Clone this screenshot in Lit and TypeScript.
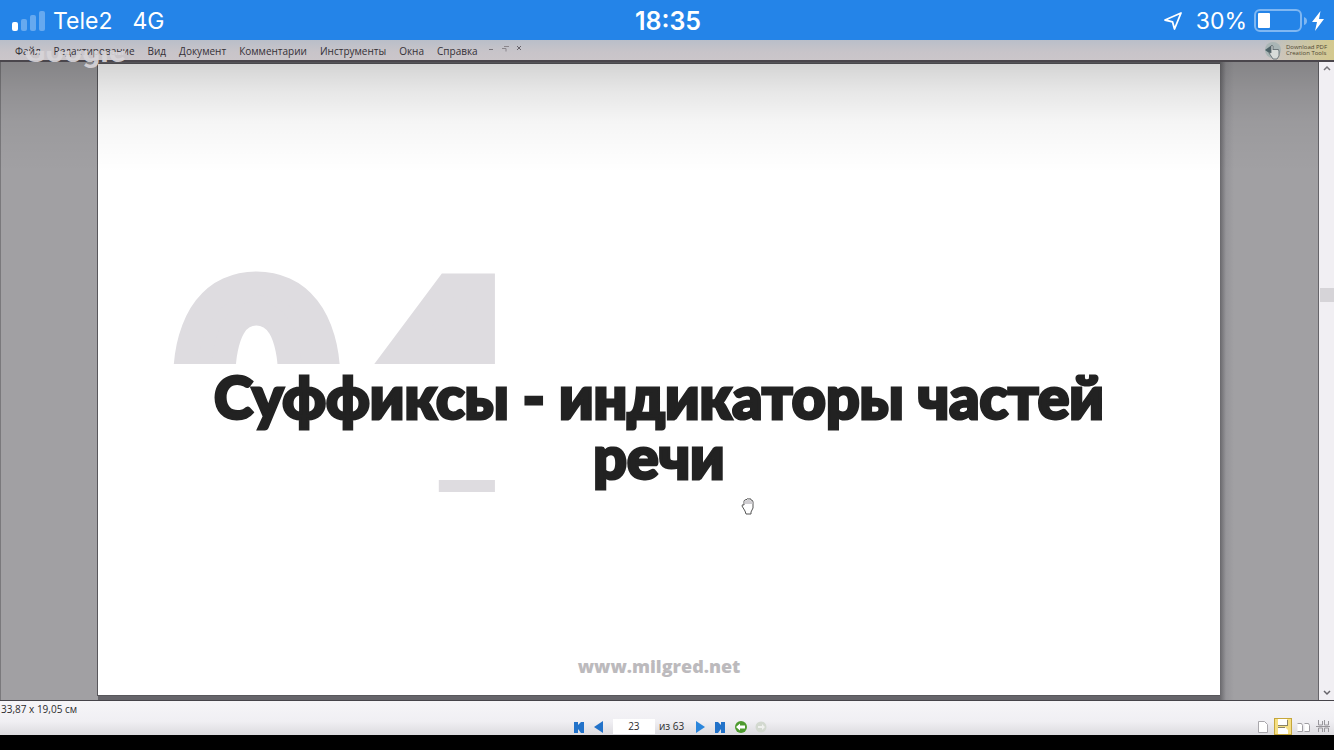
import { LitElement, html, css, svg } from "lit";
import { customElement, state } from "lit/decorators.js";

const MENU = ["Файл", "Редактирование", "Вид", "Документ", "Комментарии", "Инструменты", "Окна", "Справка"];

@customElement("phone-status")
class PhoneStatus extends LitElement {
  static styles = css`
    :host {
      display: grid;
      grid-template-columns: 1fr auto 1fr;
      align-items: center;
      box-sizing: border-box;
      height: 40px;
      padding: 2px 10px 0 12px;
      background: #2484e8;
      color: #fff;
      font: 400 23px/38px Inter, "Liberation Sans", sans-serif;
    }
    .side { display: flex; align-items: center; }
    .left { gap: 8px; }
    .net { margin-left: 12px; }
    .right { justify-content: flex-end; }
    .time { font-weight: 600; font-size: 25px; }
    .pct { margin: 0 7px 0 13px; }
    svg { display: block; }
    .bolt { margin-left: 5px; }
  `;
  render() {
    return html`
      <div class="side left">
        <svg width="33" height="20" viewBox="0 0 33 20" fill="#fff">
          <rect x="0" y="11" width="6" height="9" rx="2" />
          <g opacity=".3">
            <rect x="9" y="8" width="6" height="12" rx="2" />
            <rect x="18" y="4" width="6" height="16" rx="2" />
            <rect x="27" y="0" width="6" height="20" rx="2" />
          </g>
        </svg>
        <span>Tele2</span><span class="net">4G</span>
      </div>
      <span class="time">18:35</span>
      <div class="side right">
        <svg width="20" height="20" viewBox="0 0 20 20" fill="none" stroke="#fff" stroke-width="1.8" stroke-linejoin="round">
          <path d="M18 2 L11.5 18 L9.5 10.8 L2 9 Z" />
        </svg>
        <span class="pct">30%</span>
        <svg width="53" height="24" viewBox="0 0 53 24">
          <rect x="1" y="1" width="46" height="21" rx="5" fill="none" stroke="#fff" stroke-opacity=".42" stroke-width="2" />
          <rect x="4" y="4" width="12" height="15" rx="1" fill="#fff" />
          <path d="M50 8 Q53 9 53 12 Q53 15 50 16Z" fill="#fff" fill-opacity=".42" />
        </svg>
        <svg class="bolt" width="12" height="20" viewBox="0 0 12 20" fill="#fff">
          <path d="M8.5 0 L0 11 H5 L3 20 L12 8 H7 Z" />
        </svg>
      </div>
    `;
  }
}

@customElement("menu-strip")
class MenuStrip extends LitElement {
  static styles = css`
    :host {
      display: flex;
      position: relative;
      z-index: 2;
      align-items: center;
      height: 20px;
      padding-left: 15px;
      background: linear-gradient(#b9bec9, #c8c4c9 60%, #cbc6ca);
      color: #343036;
      font: 10px/18px "Open Sans", "Noto Sans", sans-serif;
    }
    nav { display: flex; gap: 13px; padding-top: 2px; }
    button { all: unset; cursor: pointer; white-space: nowrap; }
    .win { display: flex; gap: 4px; margin-left: 8px; padding-bottom: 4px; }
    .win button { width: 10px; height: 10px; }
    svg { display: block; }
    .mark {
      position: absolute;
      left: 24px;
      top: -7px;
      font: 700 32px/36px Roboto, "Open Sans", sans-serif;
      color: #d8d5d9;
      opacity: .9;
      pointer-events: none;
      clip-path: inset(18px 0 0 0);
    }
    a {
      display: flex;
      align-items: center;
      gap: 3px;
      margin-left: auto;
      width: 70px;
      height: 20px;
      color: #4f4630;
      font: 6px/6px "Open Sans", sans-serif;
      text-decoration: none;
      white-space: nowrap;
      background: linear-gradient(90deg, #c8c4c900, #d4c98e);
    }
  `;
  render() {
    return html`
      <nav>${MENU.map((m) => html`<button>${m}</button>`)}</nav>
      <div class="win">
        <button aria-label="Свернуть"><svg width="10" height="10" fill="none" stroke="#77737a"><path d="M3 6.5h4" /></svg></button>
        <button aria-label="Восстановить"><svg width="10" height="10" fill="none" stroke="#8a868c"><path d="M4 3.5h5M2 5.5h4v3" /></svg></button>
        <button aria-label="Закрыть"><svg width="10" height="10" fill="none" stroke="#66626a"><path d="M3 3l4 4M7 3l-4 4" /></svg></button>
      </div>
      <span class="mark">Google</span>
      <a href="#tools">
        <svg width="19" height="20" viewBox="0 0 19 20">
          <circle cx="9" cy="10" r="8" fill="#a9b5b5" />
          <path d="M1 10l7-5v10z" fill="#4d6267" />
          <path d="M7 12V6q1-1.500 2 0v4l1-1 1 1 1-1 1 1 1-1 1 2v5l-2 3H9l-4-6q1-1 2 0z" fill="#d8dbd9" stroke="#5b6569" stroke-width=".8" />
        </svg>
        <span>Download PDF<br />Creation Tools</span>
      </a>
    `;
  }
}

@customElement("slide-view")
class SlideView extends LitElement {
  static styles = css`
    :host {
      display: grid;
      position: relative;
      grid-template-columns: 98px minmax(0, 1fr) 99px 15px;
      background: #a1a0a3;
      border-top: 2px solid #4a464c;
      border-bottom: 1px solid #46444a;
      box-sizing: border-box;
    }
    .left { border-left: 1px solid #7a797c; }
    .right {
      border-right: 1px solid #66656a;
      background: linear-gradient(90deg, #69686c, #969599 6px, #a1a0a3 14px);
    }
    .desk { display: grid; padding: 2px 0 5px; background: #66656a; }
    .page {
      display: grid;
      grid-template-rows: 1fr auto;
      background: #fff;
      box-shadow: 0 0 0 1px #58575b;
    }
    .content { display: grid; align-content: start; padding-top: 172px; }
    .number, .title { grid-area: 1 / 1; }
    .number {
      display: flex;
      gap: 22px;
      padding-left: 81px;
      color: #dedce0;
      font: 900 268px/280px Lato, "Open Sans", sans-serif;
      -webkit-text-stroke: 24px #dedce0;
    }
    .zero { clip-path: inset(0 -20px 140px -20px); }
    .title {
      align-self: start;
      position: relative;
      box-sizing: border-box;
      height: 116px;
      margin: 128px 0 0;
      padding: 3px 100px 0;
      background: #fff;
      color: #222;
      text-align: center;
      font: 900 59px/60px Lato, "Open Sans", sans-serif;
      -webkit-text-stroke: 3px #222;
    }
    .site {
      padding-bottom: 17px;
      color: #bcbabd;
      text-align: center;
      font: 800 18px/24px "Open Sans", sans-serif;
    }
    .shade {
      position: absolute;
      inset: 0 15px auto 0;
      height: 110px;
      background: linear-gradient(#0000002c, #00000018 30px, #0000000a 60px, #0000);
      pointer-events: none;
    }
    .hand { position: absolute; left: 741px; top: 435px; }
    .bar {
      display: flex;
      flex-direction: column;
      align-items: center;
      justify-content: space-between;
      position: relative;
      background: #f1eff3;
    }
    .bar button { all: unset; width: 15px; height: 15px; }
    .thumb { position: absolute; top: 35.500%; left: 1px; right: 0; height: 14px; background: #d6d4d8; }
    svg { display: block; }
  `;
  render() {
    return html`
      <div class="left"></div>
      <div class="desk">
        <article class="page">
          <div class="content">
            <div class="number"><span class="zero">0</span><span>4</span></div>
            <h1 class="title">Суффиксы - индикаторы частей речи</h1>
          </div>
          <div class="site">www.milgred.net</div>
        </article>
      </div>
      <div class="right"></div>
      <div class="bar">
        <button aria-label="Вверх"><svg width="15" height="15" fill="none" stroke="#77757a" stroke-width="1.5"><path d="M5 8l3-3 3 3" /></svg></button>
        <div class="thumb"></div>
        <button aria-label="Вниз"><svg width="15" height="15" fill="none" stroke="#66646a" stroke-width="1.5"><path d="M5 6l3 3 3-3" /></svg></button>
      </div>
      <div class="shade"></div>
      <svg class="hand" width="14" height="18" viewBox="0 0 14 18">
        <path d="M3 8V4q1-2 2-1 1-2 3-1 2-1 2 1 2 0 2 2v6l-2 4v2H5l-1-3-3-5q0-2 2-1z" fill="#fff" stroke="#555" stroke-width="1" />
        <path d="M3.500 7V4q1-1 2-.5 1-1.500 2.500-.5 2 0 2 1 1 0 1.500 1v2z" fill="#cfcdd1" />
      </svg>
    `;
  }
}

@customElement("page-nav")
class PageNav extends LitElement {
  @state() page = "23";
  static styles = css`
    :host {
      display: grid;
      grid-template-rows: 17px 17px;
      height: 34px;
      background: linear-gradient(#f6f5f8, #f0eff3 60%, #dcdbdf);
      color: #2c2c2e;
      font: 10px/17px "Open Sans", "Noto Sans", sans-serif;
    }
    .size { padding-left: 1px; }
    .row { display: grid; grid-template-columns: 1fr auto 1fr; align-items: center; padding-left: 6px; }
    .nav { grid-column: 2; display: flex; align-items: center; gap: 8px; }
    .views { display: flex; justify-content: flex-end; gap: 2px; padding-right: 2px; }
    button { all: unset; display: block; }
    svg { display: block; }
    label { display: flex; align-items: center; gap: 4px; margin: 0 2px 0 0; }
    input {
      box-sizing: border-box;
      width: 42px;
      height: 15px;
      padding: 0;
      border: 0;
      background: #fff;
      color: inherit;
      text-align: center;
      font: inherit;
    }
  `;
  private icon(label: string, shape: unknown, w = 12) {
    return html`<button aria-label=${label}><svg width=${w} height="12" viewBox="0 0 ${w} 12">${shape}</svg></button>`;
  }
  private view(label: string, shape: unknown) {
    return html`<button aria-label=${label}><svg width="18" height="17" viewBox="0 0 18 17">${shape}</svg></button>`;
  }
  render() {
    return html`
      <div class="size">33,87 x 19,05 см</div>
      <div class="row">
        <div class="nav">
          ${this.icon("Первая", svg`<path d="M1 1h4v3l3-3h3v11H8L5 8v4H1z" fill="#2272c9" />`)}
          ${this.icon("Назад", svg`<path d="M10 0v12L1 6z" fill="#2272c9" />`)}
          <label><input .value=${this.page} aria-label="Страница" @input=${(e: any) => (this.page = e.target.value)} /><span>из 63</span></label>
          ${this.icon("Вперёд", svg`<path d="M2 0l9 6-9 6z" fill="#2b86dc" />`)}
          ${this.icon("Последняя", svg`<path d="M11 1H7v3L4 1H1v11h3l3-4v4h4z" fill="#2272c9" />`)}
          ${this.icon("Предыдущий вид", svg`<circle cx="7" cy="6" r="6" fill="#4d9a2e" /><path d="M2 6l4-3.500v2h5v3H6v2z" fill="#fff" />`, 13)}
          ${this.icon("Следующий вид", svg`<circle cx="6" cy="6" r="5.500" fill="#d3d9d0" /><path d="M10 6L7 3v2H3v2h4v2z" fill="#f0f1ef" />`)}
        </div>
        <div class="views">
          ${this.view("Одна страница", svg`<path d="M4.500 3.500h6l3 3v8h-9z" fill="#fff" stroke="#a9a7ac" />`)}
          ${this.view("Непрерывно", svg`<rect x=".5" y=".5" width="17" height="16" fill="#f5df83" stroke="#c5a63b" /><path d="M4 1h9v6H4zM4 9h7l3 3v4H4z" fill="#fff" /><path d="M4 7.500h10M4 9.500h7M13.500 2v5" stroke="#8b8468" fill="none" />`)}
          ${this.view("Разворот", svg`<path d="M3.500 5.500h4l1 2v6h-5M10.500 5.500h4l1 2v6h-5" fill="#fff" stroke="#a09ea3" />`)}
          ${this.view("Развороты", svg`<path d="M4.500 2v5h4V3M10.500 2v5h4V3M2 8.500h14M4.500 14v-4h4v4M10.500 14v-4h4v4" fill="none" stroke="#98969b" />`)}
        </div>
      </div>
    `;
  }
}

@customElement("app-root")
class AppRoot extends LitElement {
  static styles = css`
    :host {
      display: flex;
      flex-direction: column;
      min-height: 100vh;
      box-sizing: border-box;
      padding-bottom: 15px;
      background: #000;
    }
    slide-view { flex: 1; }
  `;
  render() {
    return html`
      <phone-status></phone-status>
      <menu-strip></menu-strip>
      <slide-view></slide-view>
      <page-nav></page-nav>
    `;
  }
}
